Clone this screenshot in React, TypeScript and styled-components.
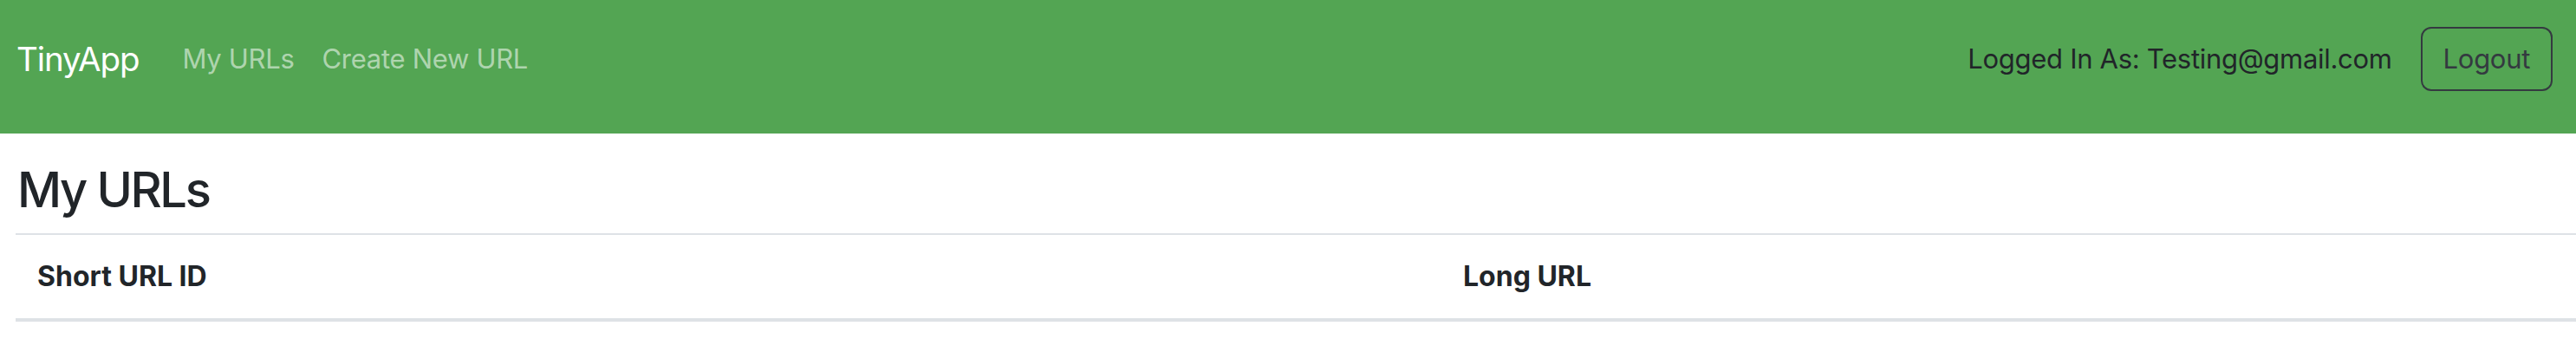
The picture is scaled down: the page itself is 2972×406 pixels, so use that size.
import React from "react";
import styled, { createGlobalStyle } from "styled-components";

const GlobalStyle = createGlobalStyle`
  html, body {
    margin: 0;
    padding: 0;
    background: #ffffff;
    overflow: hidden;
  }
  body {
    font-family: Inter, "Noto Sans", "Liberation Sans", sans-serif;
    color: #212529;
  }
`;

const NavBar = styled.nav`
  box-sizing: border-box;
  height: 154px;
  background: #53a553;
  display: flex;
  align-items: flex-start;
  justify-content: space-between;
  padding: 31px 27px 0 19px;
`;

const NavGroup = styled.div`
  display: flex;
  align-items: center;
  height: 74px;
`;

const Brand = styled.a`
  font-size: 38.5px;
  line-height: 60px;
  color: #ffffff;
  text-decoration: none;
  margin-right: 34px;
  letter-spacing: -1.1px;
`;

const NavLink = styled.a`
  font-size: 31px;
  line-height: 48px;
  color: rgba(255, 255, 255, 0.55);
  text-decoration: none;
  padding: 0 16px;
  letter-spacing: -0.3px;
`;

const UserText = styled.span`
  font-size: 31px;
  line-height: 48px;
  color: #212529;
  margin-right: 33px;
  letter-spacing: -0.3px;
`;

const OutlineButton = styled.button`
  box-sizing: border-box;
  height: 74px;
  padding: 0 24px;
  font-family: inherit;
  font-size: 31px;
  line-height: 48px;
  color: #343a40;
  background: transparent;
  border: 2px solid #343a40;
  border-radius: 12px;
  letter-spacing: -0.3px;
`;

const Main = styled.main`
  padding-left: 18px;
`;

const Heading = styled.h2`
  margin: 30px 0 15px 2px;
  font-size: 56px;
  line-height: 70px;
  font-weight: 500;
  color: #212529;
  letter-spacing: -2.4px;
`;

const Table = styled.table`
  width: 100%;
  border-collapse: collapse;
  border-top: 2px solid #dee2e6;
`;

const HeadCell = styled.th<{ $width?: string }>`
  text-align: left;
  font-size: 32px;
  line-height: 48px;
  font-weight: 700;
  color: #212529;
  padding: 24px 25px 24px 25px;
  border-bottom: 4px solid #dee2e6;
  width: ${(p) => p.$width ?? "auto"};
  letter-spacing: 0;
`;

export default function App() {
  return (
    <>
      <GlobalStyle />
      <NavBar>
        <NavGroup>
          <Brand href="#">TinyApp</Brand>
          <NavLink href="#">My URLs</NavLink>
          <NavLink href="#">Create New URL</NavLink>
        </NavGroup>
        <NavGroup>
          <UserText>Logged In As: Testing@gmail.com</UserText>
          <OutlineButton>Logout</OutlineButton>
        </NavGroup>
      </NavBar>
      <Main>
        <Heading>My URLs</Heading>
        <Table>
          <thead>
            <tr>
              <HeadCell $width="1595px">Short URL ID</HeadCell>
              <HeadCell>Long URL</HeadCell>
            </tr>
          </thead>
        </Table>
      </Main>
    </>
  );
}
